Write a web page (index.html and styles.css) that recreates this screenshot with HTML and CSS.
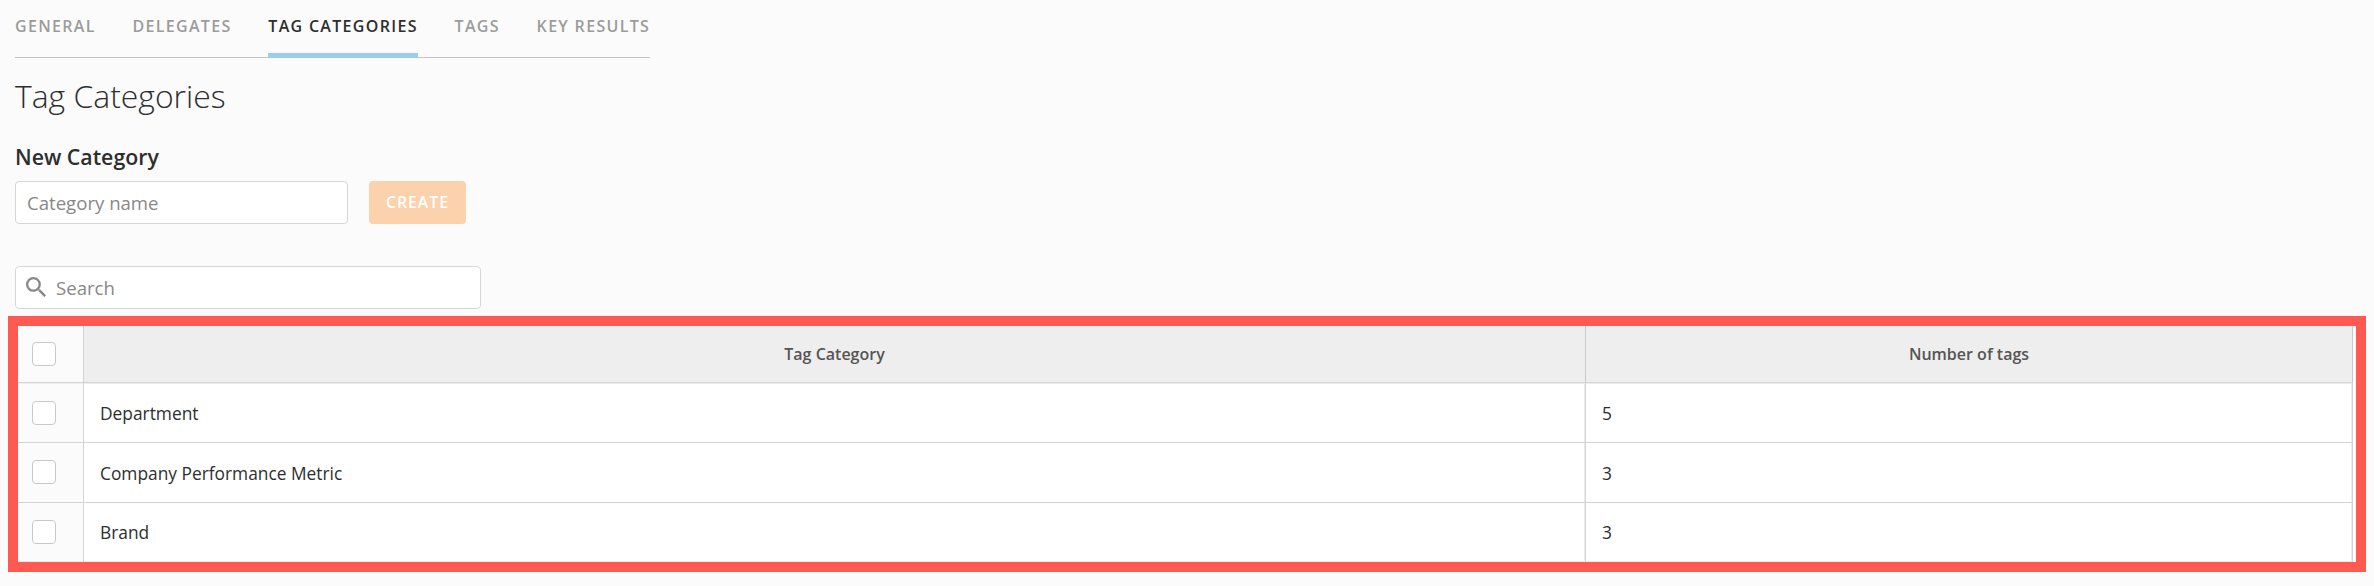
FILE: index.html
```html
<!DOCTYPE html>
<html lang="en">
<head>
<meta charset="utf-8">
<title>Tag Categories</title>
<link rel="stylesheet" href="styles.css">
</head>
<body>
<main class="page">
  <nav class="tabs">
    <a class="tab">GENERAL</a>
    <a class="tab">DELEGATES</a>
    <a class="tab tab-active">TAG CATEGORIES</a>
    <a class="tab">TAGS</a>
    <a class="tab">KEY RESULTS</a>
  </nav>
  <h1 class="title">Tag Categories</h1>
  <h2 class="subtitle">New Category</h2>
  <form class="create-form">
    <input class="field name-field" type="text" placeholder="Category name">
    <button class="create" type="button" disabled>CREATE</button>
  </form>
  <label class="field search">
    <svg class="search-icon" viewBox="3 3 17.5 17.5"><path fill="#888" d="M15.5 14h-.79l-.28-.27A6.47 6.47 0 0 0 16 9.5 6.5 6.5 0 1 0 9.5 16c1.61 0 3.09-.59 4.23-1.57l.27.28v.79l5 4.99L20.49 19l-4.99-5zm-6 0a4.5 4.5 0 1 1 0-9 4.5 4.5 0 0 1 0 9z"/></svg>
    <input class="search-input" type="text" placeholder="Search">
  </label>
</main>
<section class="highlight">
  <div class="grid">
    <div class="row head">
      <div class="cell check"><span class="box"></span></div>
      <div class="cell category">Tag Category</div>
      <div class="cell count">Number of tags</div>
    </div>
    <div class="row first">
      <div class="cell check"><span class="box"></span></div>
      <div class="cell category">Department</div>
      <div class="cell count">5</div>
    </div>
    <div class="row">
      <div class="cell check"><span class="box"></span></div>
      <div class="cell category">Company Performance Metric</div>
      <div class="cell count">3</div>
    </div>
    <div class="row last">
      <div class="cell check"><span class="box"></span></div>
      <div class="cell category">Brand</div>
      <div class="cell count">3</div>
    </div>
  </div>
</section>
</body>
</html>
```
FILE: styles.css
```css
* { box-sizing: border-box; }
body {
  margin: 0;
  height: 586px;
  overflow: hidden;
  background: #fbfbfb;
  color: #2d2e2e;
  font-family: "Open Sans", sans-serif;
}
.page { padding-left: 15px; }
.tabs {
  display: flex;
  gap: 36.8px;
  width: 635px;
  height: 58px;
  box-shadow: inset 0 -1px #c6c6c6;
}
.tab {
  height: 58px;
  padding-top: 15px;
  font-size: 16px;
  line-height: 22px;
  font-weight: 600;
  letter-spacing: 1.31px;
  white-space: nowrap;
  color: #9b9b9b;
}
.tab-active { color: #2d2e2e; border-bottom: 5px solid #9acdee; }
.title {
  margin: 16px 0 0;
  font-size: 31.9px;
  line-height: 44px;
  font-weight: 300;
}
.subtitle {
  margin: 24px 0 0;
  font-size: 21.3px;
  line-height: 30px;
  font-weight: 600;
}
.create-form { display: flex; gap: 21px; margin-top: 9px; }
.field {
  height: 43px;
  border: 1px solid #d6d6d6;
  border-radius: 4px;
  background: #fff;
}
.name-field { width: 333px; padding: 0 11px; font: 18.6px "Open Sans", sans-serif; }
.create {
  width: 97px;
  height: 43px;
  padding: 0 0 2px;
  border: 0;
  border-radius: 4px;
  background: #fbd2ac;
  color: #fff;
  font: 600 15.8px "Open Sans", sans-serif;
  letter-spacing: 1px;
}
.search {
  display: flex;
  align-items: center;
  width: 466px;
  margin-top: 42px;
  padding-left: 10px;
}
.search-icon { width: 20px; height: 20px; margin-top: -2px; }
.search-input {
  width: 400px;
  margin-left: 10px;
  padding: 0;
  border: 0;
  outline: 0;
  background: none;
  font: 18.6px "Open Sans", sans-serif;
}
.name-field::placeholder, .search-input::placeholder { color: #888; opacity: 1; }
.highlight {
  width: 2358px;
  height: 256px;
  margin: 7px 0 0 8px;
  border: 10px solid #ff5a52;
}
.grid { width: 2335px; font-size: 17.35px; }
.row {
  display: grid;
  grid-template-columns: 66px 1502px 767px;
  height: 60px;
}
.head { height: 57px; font-size: 16px; font-weight: 600; color: #555; }
.last { height: 59px; }
.cell {
  display: flex;
  align-items: center;
  padding-left: 16px;
  border-right: 1px solid #d3d3d3;
  border-bottom: 1px solid #d3d3d3;
  background: #fff;
}
.category, .count { box-shadow: inset -1px 0 #ececec; }
.head .category, .head .count { justify-content: center; padding-left: 0; background: #eee; border-right-color: #c9c9c9; box-shadow: none; }
.first .cell { box-shadow: inset 0 1px #eee; }
.first .category, .first .count { padding-top: 1px; box-shadow: inset 0 1px #eee, inset -1px 0 #ececec; }
.last .cell { border-bottom-color: #eee; }
.row .check { align-items: flex-start; padding: 17px 0 0 14px; background: #fbfbfb; }
.head .check { padding-top: 16px; }
.first .check { padding-top: 18px; }
.box { width: 24px; height: 24px; border: 1px solid #c9c9c9; border-radius: 4px; background: #fff; }
```
